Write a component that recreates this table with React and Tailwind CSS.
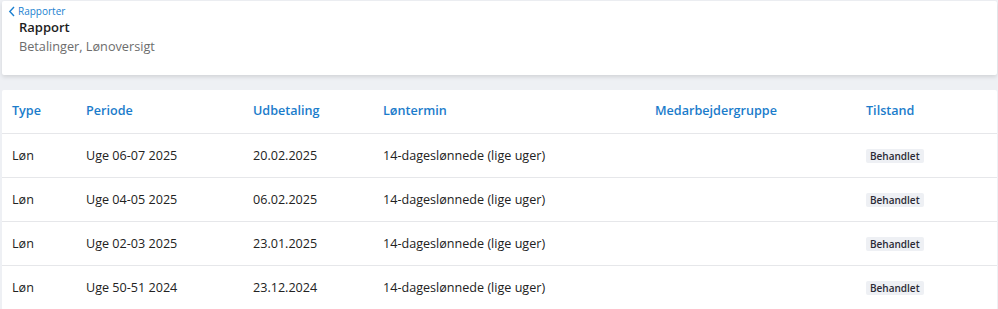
export default function App() {
  const rows = [
    ["Løn", "Uge 06-07 2025", "20.02.2025", "14-dageslønnede (lige uger)"],
    ["Løn", "Uge 04-05 2025", "06.02.2025", "14-dageslønnede (lige uger)"],
    ["Løn", "Uge 02-03 2025", "23.01.2025", "14-dageslønnede (lige uger)"],
    ["Løn", "Uge 50-51 2024", "23.12.2024", "14-dageslønnede (lige uger)"],
  ];
  const cols = "grid grid-cols-[74px_167px_130px_272px_211px_1fr] items-center pl-[10px]";
  return (
    <div className="w-[998px] h-[309px] overflow-hidden bg-[#eef0f4] pt-px pl-[2px] pr-[1px] font-['Open_Sans',sans-serif]">
      <div className="bg-white h-[74px] shadow-[0_2px_4px_rgba(0,0,0,0.12)] rounded-[2px] pt-[4px]">
        <div className="flex items-center pl-[6px] text-[10px] leading-[13px] text-[#1a7fd0]">
          <svg width="8" height="11" viewBox="0 0 8 11" className="mr-[2px]">
            <path d="M6 1 L1.8 5.5 L6 10" fill="none" stroke="#1a7fd0" strokeWidth="1.4" />
          </svg>
          Rapporter
        </div>
        <div className="pl-[17px] text-[13px] leading-[17px] font-semibold text-[#1d1d1d] mt-[1px]">Rapport</div>
        <div className="pl-[17px] text-[12.7px] leading-[18px] text-[#6d6d6d] mt-[1px]">Betalinger, Lønoversigt</div>
      </div>
      <div className="bg-white mt-[15px] rounded-[2px]">
        <div className={`${cols} h-[44px] border-b border-[#e6e7ea] text-[12.6px] font-semibold text-[#1b7ccb]`}>
          <div>Type</div>
          <div>Periode</div>
          <div>Udbetaling</div>
          <div>Løntermin</div>
          <div>Medarbejdergruppe</div>
          <div>Tilstand</div>
        </div>
        {rows.map((r, i) => (
          <div key={i} className={`${cols} h-[44px] border-b border-[#e6e7ea] text-[12.6px] text-[#222] pt-[2px]`}>
            <div>{r[0]}</div>
            <div>{r[1]}</div>
            <div>{r[2]}</div>
            <div>{r[3]}</div>
            <div></div>
            <div>
              <span className="inline-block bg-[#eef0f4] rounded-[2px] px-[4px] text-[10px] leading-[14px] font-semibold text-[#2a2a35]">Behandlet</span>
            </div>
          </div>
        ))}
      </div>
    </div>
  );
}
